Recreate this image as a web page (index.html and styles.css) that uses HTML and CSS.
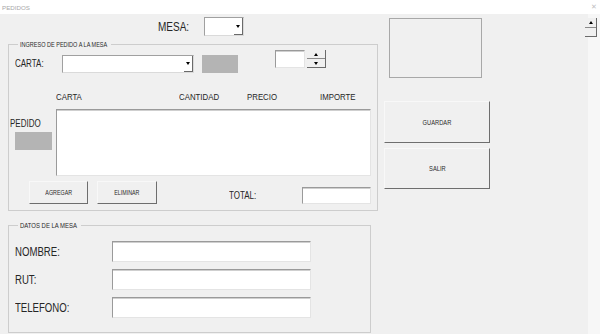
FILE: index.html
```html
<!DOCTYPE html>
<html lang="es">
<head>
  <meta charset="UTF-8">
  <title>PEDIDOS</title>
  <link rel="stylesheet" href="styles.css">
</head>
<body>

  <div class="titlebar">
    <span>PEDIDOS</span>
    <span class="cerrar">✕</span>
  </div>

  <div class="form">
    <div class="izq">
      <div class="fila-mesa">
        <label>MESA:</label>
        <div class="combo mesa"><span class="flecha"></span></div>
      </div>

      <!-- Marco del pedido -->
      <fieldset class="marco ingreso">
        <legend><span>INGRESO DE PEDIDO A LA MESA</span></legend>

        <div class="fila-carta">
          <label>CARTA:</label>
          <div class="combo carta"><span class="flecha"></span></div>
          <div class="gris"></div>
          <div class="texto cant"></div>
          <div class="spin">
            <span class="arriba"></span>
            <span class="abajo"></span>
          </div>
        </div>

        <div class="cabecera">
          <span class="c-carta">CARTA</span>
          <span class="c-cant">CANTIDAD</span>
          <span class="c-precio">PRECIO</span>
          <span>IMPORTE</span>
        </div>

        <div class="fila-lista">
          <div class="pedido">
            <label>PEDIDO</label>
            <div class="gris chico"></div>
          </div>
          <div class="lista"></div>
        </div>

        <div class="fila-botones">
          <button class="boton agregar"><span>AGREGAR</span></button>
          <button class="boton eliminar"><span>ELIMINAR</span></button>
          <label class="total-label">TOTAL:</label>
          <div class="texto total"></div>
        </div>
      </fieldset>

      <!-- Datos de la mesa -->
      <fieldset class="marco datos">
        <legend><span>DATOS DE LA MESA</span></legend>
        <div class="campo"><label>NOMBRE:</label><div class="texto"></div></div>
        <div class="campo"><label>RUT:</label><div class="texto"></div></div>
        <div class="campo"><label>TELEFONO:</label><div class="texto"></div></div>
      </fieldset>
    </div>

    <div class="der">
      <div class="imagen"></div>
      <button class="boton grande guardar"><span>GUARDAR</span></button>
      <button class="boton grande salir"><span>SALIR</span></button>
    </div>

    <div class="barra">
      <div class="scroll"><span></span></div>
    </div>
  </div>

</body>
</html>
```

FILE: styles.css
```css
* {
  box-sizing: border-box;
}
body {
  margin: 0;
  width: 600px;
  height: 334px;
  overflow: hidden;
  background: #f0f0f0;
  font-family: "Liberation Sans", Arial, sans-serif;
  color: #262626;
}
.titlebar {
  height: 14px;
  background: #fff;
  display: flex;
  justify-content: space-between;
  align-items: center;
  padding: 0 3px 0 2px;
  font-size: 6.2px;
  color: #a8a8a8;
}
.cerrar {
  font-size: 7px;
  color: #c0c0c0;
}
.form {
  display: flex;
  height: 320px;
}
.izq {
  width: 370px;
  margin-left: 8px;
}

/* texto estrecho como en el formulario original */
.fila-mesa label,
.fila-carta label,
.cabecera span,
.pedido label,
.total-label,
.campo label,
.marco legend span {
  transform: scaleX(.8);
  transform-origin: left center;
  white-space: nowrap;
}
.boton span,
.marco legend span {
  display: inline-block;
  white-space: nowrap;
}
.boton span {
  transform: scaleX(.8);
}

.fila-mesa {
  display: flex;
  align-items: center;
  height: 19px;
  margin-top: 3px;
  padding-left: 150px;
}
.fila-mesa label {
  width: 46px;
  font-size: 12.5px;
}

/* controles tipo windows */
.combo {
  display: flex;
  justify-content: flex-end;
  background: #fff;
  border: 1px solid;
  border-color: #a0a0a0 #dadada #dadada #a0a0a0;
}
.flecha {
  width: 9px;
  display: flex;
  align-items: center;
  justify-content: center;
  border-right: 1px solid #6a6a6a;
  border-bottom: 1px solid #6a6a6a;
}
.flecha::after {
  content: "";
  border-left: 2px solid transparent;
  border-right: 2px solid transparent;
  border-top: 3px solid #000;
}
.mesa {
  width: 40px;
  height: 19px;
}
.texto, .lista {
  background: #fff;
  border: 1px solid;
  border-color: #9a9a9a #e4e4e4 #e4e4e4 #9a9a9a;
  box-shadow: inset 0 1px 0 #cfcfcf;
}
.gris {
  width: 36px;
  height: 18px;
  background: #b4b4b4;
}
.boton {
  padding: 0;
  font-family: inherit;
  font-size: 6.7px;
  color: #2a2a2a;
  background: #f0f0f0;
  border: 1px solid;
  border-color: #f8f8f8 #6e6e6e #6e6e6e #f8f8f8;
}

/* marcos */
.marco {
  margin: 0;
  padding: 0;
  border: 1px solid #cdcdcd;
}
.marco legend {
  margin-left: 9px;
  padding: 0 2px;
  line-height: 9px;
  color: #2a2a2a;
}
.marco legend span {
  transform: scaleX(.85);
}
.ingreso {
  width: 370px;
  margin-top: 4px;
  padding-bottom: 6px;
}
.ingreso legend {
  width: 93px;
  font-size: 6.5px;
}
.fila-carta {
  display: flex;
  align-items: flex-start;
  margin-top: 1px;
  font-size: 10px;
}
.fila-carta label {
  width: 47px;
  margin-left: 6px;
  margin-top: 8px;
}
.carta {
  width: 132px;
  height: 18px;
  margin-top: 5px;
}
.fila-carta .gris {
  margin-left: 8px;
  margin-top: 5px;
}
.cant {
  width: 30px;
  height: 18px;
  margin-left: 37px;
}
.spin {
  width: 19px;
  height: 18px;
  margin-left: 2px;
  display: flex;
  flex-direction: column;
  border-right: 1px solid #6a6a6a;
  border-bottom: 1px solid #6a6a6a;
}
.spin span {
  flex: 1;
  display: flex;
  align-items: center;
  justify-content: center;
}
.arriba {
  border-bottom: 1px solid #8a8a8a;
}
.arriba::after {
  content: "";
  border-left: 2px solid transparent;
  border-right: 2px solid transparent;
  border-bottom: 3px solid #000;
}
.abajo::after {
  content: "";
  border-left: 2px solid transparent;
  border-right: 2px solid transparent;
  border-top: 3px solid #000;
}
.cabecera {
  display: flex;
  margin-top: 18px;
  padding-left: 47px;
  font-size: 9.8px;
  line-height: 12px;
}
.c-carta {
  width: 123px;
}
.c-cant {
  width: 68px;
}
.c-precio {
  width: 73px;
}
.fila-lista {
  display: flex;
  margin-top: 6px;
}
.pedido {
  width: 47px;
}
.pedido label {
  display: block;
  margin: 9px 0 0 1px;
  line-height: 12px;
  font-size: 10px;
}
.gris.chico {
  width: 37px;
  margin: 2px 0 0 6px;
}
.lista {
  width: 315px;
  height: 67px;
}
.fila-botones {
  display: flex;
  align-items: flex-start;
  margin-top: 5px;
}
.agregar {
  width: 59px;
  height: 23px;
  margin-left: 20px;
}
.eliminar {
  width: 60px;
  height: 23px;
  margin-left: 9px;
}
.total-label {
  width: 73px;
  margin: 9px 0 0 72px;
  line-height: 12px;
  font-size: 10px;
}
.total {
  width: 69px;
  height: 17px;
  margin-top: 6px;
}
.datos {
  width: 363px;
  margin-top: 10px;
  padding-bottom: 14px;
}
.datos legend {
  width: 63px;
  font-size: 7px;
}
.campo {
  display: flex;
  align-items: center;
  margin-top: 7px;
  font-size: 12px;
}
.campo:first-of-type {
  margin-top: 11px;
}
.campo label {
  width: 97px;
  margin-left: 6px;
}
.campo .texto {
  width: 199px;
  height: 21px;
}

/* columna derecha */
.der {
  width: 106px;
  margin-left: 6px;
  display: flex;
  flex-direction: column;
}
.imagen {
  width: 93px;
  height: 60px;
  margin: 4px 0 0 5px;
  border: 1px solid #a8a8a8;
}
.grande {
  width: 106px;
  height: 42px;
  font-size: 7.2px;
}
.guardar {
  margin-top: 23px;
}
.salir {
  height: 41px;
  margin-top: 5px;
}
.barra {
  width: 15px;
  margin-left: auto;
  background: linear-gradient(to right, transparent 3px, #f7f7f7 3px);
}
.scroll {
  width: 12px;
  height: 19px;
  margin-top: 4px;
  background: #f0f0f0;
  border-right: 1px solid #6a6a6a;
  border-bottom: 1px solid #6a6a6a;
}
.scroll span {
  height: 10px;
  display: flex;
  align-items: center;
  justify-content: center;
  border-bottom: 1px solid #8a8a8a;
}
.scroll span::after {
  content: "";
  border-left: 2px solid transparent;
  border-right: 2px solid transparent;
  border-bottom: 3px solid #000;
}
```
